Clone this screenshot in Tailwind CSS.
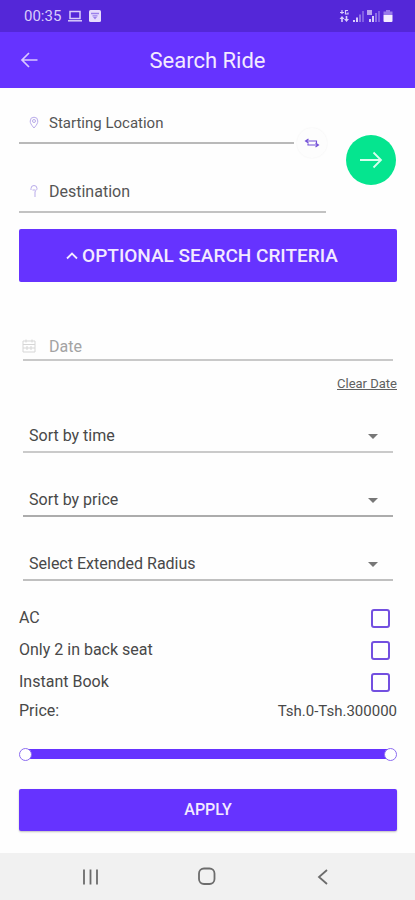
<!DOCTYPE html>
<html lang="en">
<head>
<meta charset="utf-8">
<meta name="viewport" content="width=device-width, initial-scale=1">
<title>Search Ride</title>
<script src="https://cdn.jsdelivr.net/npm/@tailwindcss/browser@4"></script>
</head>
<body class="flex min-h-screen flex-col bg-[#fefefe] font-['Roboto',sans-serif] text-[#484848]">

<div class="flex h-8 items-center bg-[#5427d8] pl-6 pr-5 text-[#d9ccfb]">
  <span class="text-[15px] leading-5">00:35</span>
  <svg class="ml-1.5 h-4 w-4" viewBox="0 0 16 16" fill="none" stroke="currentColor" stroke-width="1.5"><rect x="3" y="3.5" width="10" height="7"/><path d="M1 12.8h14"/></svg>
  <svg class="ml-1 h-4 w-4" viewBox="0 0 16 16"><rect x="2" y="2" width="12" height="12" rx="1.5" fill="#e6dcfd"/><path d="M4 5.500h8M5.500 7.800h5" fill="none" stroke="#9a80ea" stroke-width="1.300"/><path d="M6 9h4l-2 2.500z" fill="#9a80ea"/></svg>
  <svg class="ml-auto h-4 w-14" viewBox="0 0 56 16" fill="#d9ccfb">
    <path d="M3 2v4M1 4.500h4M9 2.500H6.500v3.500H9V4.500" fill="none" stroke="#d9ccfb" stroke-width="1.200"/>
    <path d="M0.500 11 3 8l2.500 3H3.800v3H2.200v-3zM5 11l2.500 3 2.500-3H8.300V8H6.700v3z"/>
    <rect x="14" y="12" width="2" height="2"/><rect x="17" y="9.500" width="2" height="4.500"/><rect x="20" y="6.500" width="2" height="7.500" opacity=".45"/><rect x="23" y="3" width="2" height="11" opacity=".35"/>
    <path d="M28 2h5v5h-5z" opacity=".75"/><rect x="30" y="11" width="2" height="3"/><rect x="33" y="8" width="2" height="6"/><rect x="36" y="5" width="2" height="9" opacity=".45"/><rect x="39" y="3" width="2" height="11" opacity=".35"/>
    <path d="M47 2h4v1.500h2.500V7h-9V3.500H47z" opacity=".5"/><path d="M44.500 7h9v6q0 1-1 1h-7q-1 0-1-1z" fill="#f3edff"/>
  </svg>
</div>

<header class="grid h-14 grid-cols-[1fr_auto_1fr] items-center bg-[#6633ff] px-5 pt-0.5 text-[#f3eaff]">
  <button type="button" aria-label="Back" class="h-5 w-5"><svg class="h-5 w-5" viewBox="0 0 20 20" fill="none" stroke="#d9c8ff" stroke-width="1.700"><path d="M17.500 9H2.500M9 2 2 9l7 7"/></svg></button>
  <h1 class="text-[22px] leading-7">Search Ride</h1>
</header>

<main class="grow pr-[18px] pl-[19px]">
  <form>
    <div class="flex items-center justify-between">
      <div class="w-[307px]">
        <div class="relative mr-8 flex h-14 items-end border-b-2 border-[#b9b9b9] pb-[7px]">
          <span class="grid h-6 w-[30px] shrink-0 place-items-center"><svg class="h-4 w-3" viewBox="0 0 12 16" fill="none" stroke="#b9abea"><path d="M6 13C3 9.500 2.200 8 2.200 6a3.800 3.800 0 0 1 7.600 0c0 2-.8 3.500-3.800 7z"/><circle cx="6" cy="6" r="1.500"/></svg></span>
          <input type="text" aria-label="Starting Location" placeholder="Starting Location" class="h-6 w-full min-w-0 text-[15px] outline-none placeholder:text-[#555]">
          <button type="button" aria-label="Swap locations" class="absolute -right-[33px] -bottom-4 grid h-[30px] w-[30px] place-items-center rounded-full bg-[#fdfdfd] shadow-[0_0_2px_rgba(0,0,0,0.06)]"><svg class="h-3.5 w-4" viewBox="0 0 16 14" fill="none" stroke="#7350d8" stroke-width="1.100"><path d="M1.500 5h11v2M4.500 3 1.500 5l3 2M4 7.500V9h10.500M11.500 7l3 2-3 2"/></svg></button>
        </div>
        <div class="flex h-[69px] items-end border-b-2 border-[#c2c2c2] pb-[7px]">
          <span class="grid h-6 w-[30px] shrink-0 place-items-center"><svg class="h-4 w-3" viewBox="0 0 12 16" fill="none" stroke="#b9abea"><path d="M3 6V4.500A3 3 0 0 1 9 4.500c0 2-2 2-2 3.500v5M4.500 6h3"/></svg></span>
          <input type="text" aria-label="Destination" placeholder="Destination" class="h-6 w-full min-w-0 text-base outline-none placeholder:text-[#555]">
        </div>
      </div>
      <button type="submit" aria-label="Search" class="mt-[18px] mr-px grid h-[50px] w-[50px] place-items-center rounded-full bg-[#05e58f]"><svg class="h-6 w-6" viewBox="0 0 24 24" fill="none" stroke="#d8ffee" stroke-width="1.800"><path d="M1 12h21M14.500 4.500 22 12l-7.500 7.500"/></svg></button>
    </div>

    <button type="button" class="mt-4 flex h-[53px] w-full items-center justify-center gap-1 rounded-[2px] bg-[#6633ff] pt-0.5 pr-3 text-[19px] font-medium text-[#f3eaff]"><svg class="h-3 w-3" viewBox="0 0 12 12" fill="none" stroke="currentColor" stroke-width="1.800"><path d="M1 7.500 6 2.500l5 5"/></svg>OPTIONAL SEARCH CRITERIA</button>

    <div class="mr-1 ml-1 mt-[50px] flex h-[29px] items-start border-b-2 border-[#c9c9c9]">
      <svg class="mt-1.5 -ml-0.5 h-4 w-4 shrink-0" viewBox="0 0 16 16" fill="none" stroke="#d6d6d6"><path d="M2 3h12v11H2zM2 6.500h12M5 1.500v3M11 1.500v3M2 10h12M6 8v4M10 8v4"/></svg>
      <input type="text" aria-label="Date" placeholder="Date" class="mt-[3px] ml-3 h-6 w-full min-w-0 text-base outline-none placeholder:text-[#a3a3a3]">
    </div>
    <div class="mt-[11px] flex h-6 items-center justify-end"><a href="#" class="text-[13px] leading-6 text-[#606060] underline">Clear Date</a></div>

    <div class="mx-1 mt-[17px] flex flex-col gap-6">
      <div class="relative"><select aria-label="Sort by time" class="h-10 w-full appearance-none border-b-2 border-[#cacaca] bg-transparent pt-2 pl-1.5 text-base outline-none"><option>Sort by time</option></select><svg class="pointer-events-none absolute top-5 right-[15px] h-[7px] w-2.5" viewBox="0 0 10 7"><path d="M0 1h10L5 6z" fill="#777"/></svg></div>
      <div class="relative"><select aria-label="Sort by price" class="h-10 w-full appearance-none border-b-2 border-[#acacac] bg-transparent pt-2 pl-1.5 text-base outline-none"><option>Sort by price</option></select><svg class="pointer-events-none absolute top-5 right-[15px] h-[7px] w-2.5" viewBox="0 0 10 7"><path d="M0 1h10L5 6z" fill="#777"/></svg></div>
      <div class="relative"><select aria-label="Select Extended Radius" class="h-10 w-full appearance-none border-b-2 border-[#c0c0c0] bg-transparent pt-2 pl-1.5 text-base outline-none"><option>Select Extended Radius</option></select><svg class="pointer-events-none absolute top-5 right-[15px] h-[7px] w-2.5" viewBox="0 0 10 7"><path d="M0 1h10L5 6z" fill="#777"/></svg></div>
    </div>

    <div class="mt-[21px] text-base">
      <label class="flex h-8 items-center justify-between pr-[7px]">AC<input type="checkbox" class="h-[19px] w-[19px] appearance-none rounded-[3px] border-2 border-[#7350e0] bg-white"></label>
      <label class="flex h-8 items-center justify-between pr-[7px]">Only 2 in back seat<input type="checkbox" class="h-[19px] w-[19px] appearance-none rounded-[3px] border-2 border-[#7350e0] bg-white"></label>
      <label class="flex h-8 items-center justify-between pr-[7px]">Instant Book<input type="checkbox" class="h-[19px] w-[19px] appearance-none rounded-[3px] border-2 border-[#7350e0] bg-white"></label>
      <div class="flex h-6 items-center justify-between pt-0.5"><span>Price:</span><output class="text-[15px]">Tsh.0-Tsh.300000</output></div>
    </div>

    <div class="relative mt-[25px] flex h-[14px] items-center">
      <div class="mx-2 h-2.5 w-full bg-[#6633ff]"></div>
      <input type="range" aria-label="Minimum price" min="0" max="300000" value="0" class="pointer-events-none absolute inset-0 h-[14px] w-full appearance-none bg-transparent [&::-webkit-slider-thumb]:pointer-events-auto [&::-webkit-slider-thumb]:h-[13px] [&::-webkit-slider-thumb]:w-[13px] [&::-webkit-slider-thumb]:appearance-none [&::-webkit-slider-thumb]:rounded-full [&::-webkit-slider-thumb]:border [&::-webkit-slider-thumb]:border-[#8c6cf0] [&::-webkit-slider-thumb]:bg-white">
      <input type="range" aria-label="Maximum price" min="0" max="300000" value="300000" class="pointer-events-none absolute inset-0 h-[14px] w-full appearance-none bg-transparent [&::-webkit-slider-thumb]:pointer-events-auto [&::-webkit-slider-thumb]:h-[13px] [&::-webkit-slider-thumb]:w-[13px] [&::-webkit-slider-thumb]:appearance-none [&::-webkit-slider-thumb]:rounded-full [&::-webkit-slider-thumb]:border [&::-webkit-slider-thumb]:border-[#8c6cf0] [&::-webkit-slider-thumb]:bg-white">
    </div>

    <button type="submit" class="mt-7 mb-5 h-[42px] w-full rounded-[2px] bg-[#6633ff] text-base font-medium text-[#f3eaff] shadow-[0_1px_2px_rgba(0,0,0,0.25)]">APPLY</button>
  </form>
</main>

<nav class="flex h-[47px] items-center justify-between bg-[#f1f1f1] px-20" aria-label="System">
  <button type="button" aria-label="Recent apps"><svg class="h-5 w-5" viewBox="0 0 20 20" fill="none" stroke="#6c6c6c" stroke-width="1.800"><path d="M4 2.500v15M10.500 2.500v15M17 2.500v15"/></svg></button>
  <button type="button" aria-label="Home"><svg class="h-5 w-5" viewBox="0 0 20 20" fill="none" stroke="#6c6c6c" stroke-width="1.800"><rect x="1" y="1.500" width="15.500" height="15.500" rx="5"/></svg></button>
  <button type="button" aria-label="Back"><svg class="h-5 w-5" viewBox="0 0 20 20" fill="none" stroke="#6c6c6c" stroke-width="1.800"><path d="M12 3 4 10l8 7"/></svg></button>
</nav>
</body>
</html>
